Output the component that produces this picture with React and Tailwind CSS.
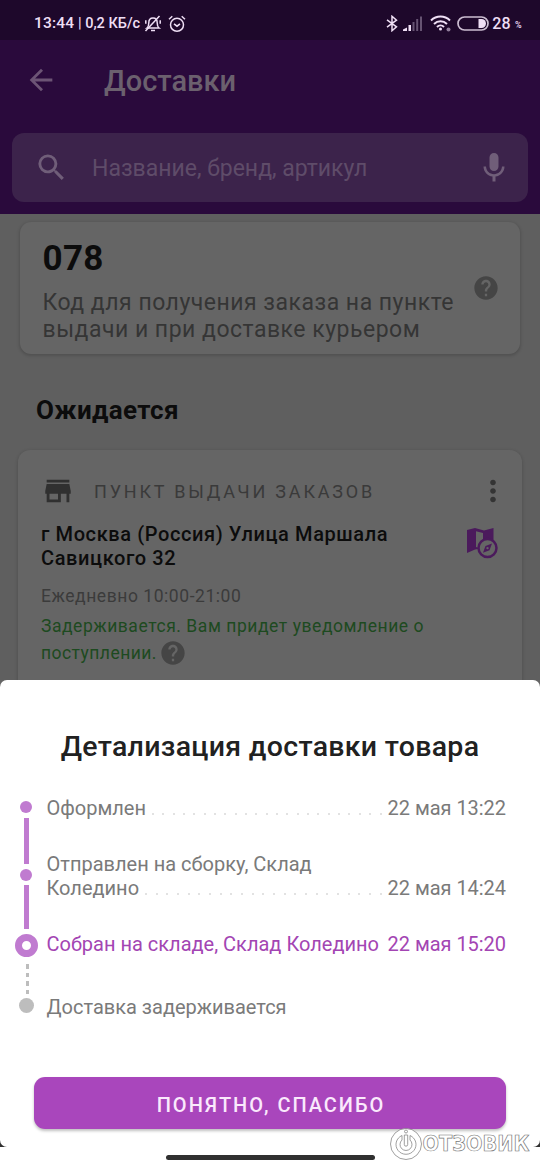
import { MdArrowBack, MdSearch, MdMic, MdHelp, MdStore, MdMoreVert } from "react-icons/md"

const steps = [
  { lines: ["Оформлен"], date: "22 мая 13:22", dots: true, className: "mt-[22px] text-[#7a7a7a]" },
  {
    lines: ["Отправлен на сборку, Склад", "Коледино"],
    date: "22 мая 14:24",
    dots: true,
    className: "mt-8 text-[#7a7a7a]",
  },
  { lines: ["Собран на складе, Склад Коледино"], date: "22 мая 15:20", className: "mt-8 text-[#a345b3]" },
  { lines: ["Доставка задерживается"], className: "mt-[39px] text-[#7a7a7a]" },
]

function StatusBar() {
  return (
    <div className="flex h-10 shrink-0 items-center bg-[#1e082b] pt-[7px] pl-[34px] pr-[17px] font-medium text-[#efdff5]">
      <span className="w-[107px] whitespace-nowrap text-[14.5px]">
        <span className="text-[15.5px] tracking-[0.2px]">13:44</span> | 0,2 КБ/с
      </span>
      <svg className="ml-[3px] h-[18px] w-[18px]" viewBox="0 0 18 18" fill="none" stroke="currentColor" strokeWidth="1.5">
        <path d="M3 13h12c-1.600-1.200-1.800-2.600-1.800-5.200C13.200 4.800 11.500 3 9 3S4.800 4.800 4.800 7.800C4.800 10.400 4.600 11.800 3 13z" />
        <path d="M7 15.500h4M1.500 16 15.500 1M1.800 5.200v3.500M16.200 5.200v3.500" />
      </svg>
      <svg className="ml-[6px] h-[18px] w-[18px]" viewBox="0 0 18 18" fill="none" stroke="currentColor" strokeWidth="1.5">
        <circle cx="9" cy="9.800" r="6.500" />
        <path d="M6 8.800l3 2.400 3-2.400M1 4.200 4.300 1.200M17 4.200 13.700 1.200" />
      </svg>
      <svg className="ml-auto h-[17px] w-[12px]" viewBox="0 0 12 17" fill="none" stroke="currentColor" strokeWidth="1.500">
        <path d="M1 4.800l9.500 7L6 15.700V1.300l4.500 3.900L1 12.200" />
      </svg>
      <svg className="ml-[5px] h-[15px] w-[20px]" viewBox="0 0 20 15" fill="currentColor">
        <path d="M0 13.500 4 11.500V15H0zM5.500 9h2.500v6H5.500z" />
        <path opacity=".35" d="M9.500 6h2v9h-2zM13.200 3h2v12h-2zM17 0.500h2v14.500h-2z" />
      </svg>
      <svg className="ml-[7px] h-[17px] w-[21px]" viewBox="0 0 21 17" fill="none" stroke="currentColor" strokeWidth="2">
        <path d="M1 5.500c5.400-5.200 13.600-5.200 19 0M4 9c3.800-3.600 9.200-3.600 13 0M7 12c2-2 5-2 7 0" />
        <circle cx="10.500" cy="14" r="1.500" fill="currentColor" stroke="none" />
        <circle cx="18.500" cy="14.500" r="2" fill="currentColor" stroke="none" opacity=".55" />
      </svg>
      <svg className="ml-[6px] h-[15px] w-[32px]" viewBox="0 0 32 15">
        <rect x="1" y="1" width="30" height="13" rx="6.500" fill="none" stroke="#cbbdd1" strokeWidth="1.700" />
        <path d="M21.500 3h3a4.500 4.500 0 0 1 0 9h-3z" fill="currentColor" />
      </svg>
      <span className="ml-[3px] text-[16px] tracking-[0.3px]">28</span>
      <span className="ml-[4px] w-[8px] pt-1 text-[9px]">%</span>
    </div>
  )
}

function Header() {
  return (
    <div className="flex h-[174px] shrink-0 flex-col bg-[#2a0a3c]">
      <div className="flex h-[93px] items-center pb-[12px] pl-6 text-[#6c5475]">
        <MdArrowBack className="mb-px h-[34px] w-[34px]" />
        <h1 className="ml-[46px] pt-[2px] text-[29px] font-medium text-[#6b606e]">Доставки</h1>
      </div>
      <div className="mx-3 flex h-[69px] items-center rounded-xl bg-[#3c234b] pl-[22px] pr-4 text-[#705e79]">
        <MdSearch className="h-[35px] w-[35px]" />
        <span className="ml-[23px] pt-[3px] text-[23px] text-[#5f4c69]">Название, бренд, артикул</span>
        <MdMic className="ml-auto h-[36px] w-[36px]" />
      </div>
    </div>
  )
}

function MapIcon() {
  return (
    <svg className="h-[32px] w-[32px]" viewBox="0 0 32 32">
      <path d="M1 3 9 1l9 2.500L27.500 1v20H18L9 22.500 1 26z" fill="#4b1a5c" />
      <path d="M10 4.200 17 6v16.500l-7-2.500z" fill="#656565" />
      <circle cx="21.500" cy="21" r="9" fill="#656565" stroke="#4b1a5c" strokeWidth="2.500" />
      <path d="M26 16.500l-2.500 6.800L17 25.700l2.500-6.700z" fill="#4b1a5c" />
      <circle cx="21.500" cy="21.100" r="1.200" fill="#656565" />
    </svg>
  )
}

function Orders() {
  return (
    <div className="h-[466px] shrink-0 overflow-hidden bg-[#5f5f5f] pt-[8px]">
      <div className="mx-5 flex h-[132px] items-center rounded-[11px] bg-[#656565] pl-[22.5px] pr-[20px] shadow-[0_1px_3px_1px_rgba(0,0,0,0.15)]">
        <div className="h-full whitespace-nowrap pt-[16px]">
          <p className="text-[35px] leading-[42px] font-bold tracking-[0.3px] text-[#0c0c0c]">078</p>
          <p className="mt-[9px] text-[23px] leading-[27px] tracking-[0.5px] text-[#353535]">
            Код для получения заказа на пункте
            <br />
            выдачи и при доставке курьером
          </p>
        </div>
        <MdHelp className="ml-auto h-[28px] w-[28px] shrink-0 text-[#454545]" />
      </div>
      <h2 className="mt-[40px] ml-[36px] text-[26px] leading-8 font-bold tracking-[0.35px] text-[#0c0c0c]">Ожидается</h2>
      <div className="mx-[18px] mt-[24px] h-[260px] rounded-[12px] bg-[#656565] pt-[24px] pl-[23px] pr-[12px] shadow-[0_1px_3px_1px_rgba(0,0,0,0.12)]">
        <div className="flex h-[34px] items-center">
          <MdStore className="h-[34px] w-[34px] text-[#303030]" />
          <span className="ml-[19px] whitespace-nowrap text-[18px] tracking-[2.8px] text-[#3a3a3a]">ПУНКТ ВЫДАЧИ ЗАКАЗОВ</span>
          <MdMoreVert className="ml-auto h-[34px] w-[34px] text-[#343434]" />
        </div>
        <div className="mt-[15px] flex justify-between pr-[12px]">
          <p className="whitespace-nowrap text-[20px] leading-[23.5px] font-medium tracking-[0.6px] text-[#0c0c0c]">
            г Москва (Россия) Улица Маршала
            <br />
            Савицкого 32
          </p>
          <div className="pt-[4px]">
            <MapIcon />
          </div>
        </div>
        <p className="mt-[14px] text-[17.5px] leading-6 tracking-[0.55px] text-[#3b3b3b]">Ежедневно 10:00-21:00</p>
        <p className="mt-[5px] whitespace-nowrap text-[17.5px] leading-[27px] tracking-[0.55px] text-[#1d4a20]">
          Задерживается. Вам придет уведомление о
        </p>
        <div className="flex h-[27px] items-center text-[17.5px] leading-[27px] tracking-[0.45px] text-[#1d4a20]">
          поступлении.
          <MdHelp className="mb-[2px] ml-[2px] h-[28px] w-[28px] text-[#454545]" />
        </div>
      </div>
    </div>
  )
}

function Timeline() {
  return (
    <div className="flex w-[22px] shrink-0 flex-col items-center">
      <div className="mt-[27px] h-[12px] w-[12px] rounded-full bg-[#c07bd0]" />
      <div className="mt-[5px] h-[46px] w-[5px] bg-[#c07bd0]" />
      <div className="mt-[5px] h-[12px] w-[12px] rounded-full bg-[#c07bd0]" />
      <div className="mt-[4px] h-[44px] w-[5px] bg-[#c07bd0]" />
      <div className="mt-[5px] h-[23px] w-[23px] rounded-full border-[7px] border-[#c07bd0]" />
      <div className="mt-[7px] ml-[3px] flex flex-col gap-[4px]">
        {[0, 1, 2, 3].map((i) => (
          <div key={i} className="h-[4.5px] w-[3px] bg-[#bdbdbd]" />
        ))}
      </div>
      <div className="mt-[4px] h-[15px] w-[15px] rounded-full bg-[#bdbdbd]" />
    </div>
  )
}

function Step({ step }) {
  const last = step.lines.length - 1
  return (
    <div className={step.className}>
      {step.lines.map((line, i) => (
        <div key={line} className="flex h-6 items-center whitespace-nowrap text-[20px] leading-6">
          <span>{line}</span>
          {i === last && step.dots && (
            <span className="ml-[6px] mr-[6px] flex flex-1 justify-between pt-[11px]">
              {Array.from({ length: 23 }, (_, n) => (
                <i key={n} className="h-[2px] w-[2px] rounded-full bg-[#d9d9d9]" />
              ))}
            </span>
          )}
          {i === last && step.date && <span className="ml-auto tracking-[-0.04px]">{step.date}</span>}
        </div>
      ))}
    </div>
  )
}

function Watermark() {
  return (
    <svg className="absolute top-[1126px] left-[388px] h-[36px] w-[150px]" viewBox="0 0 150 36" fill="#fff" stroke="#777" strokeWidth="0.7">
      <circle cx="18" cy="18" r="15.500" />
      <path d="M14 9.500a10 9.800 0 1 0 8 0v4.500a6 6 0 1 1-8 0z" />
      <path d="M16.300 9h3.400v9.500a1.700 1.700 0 0 1-3.400 0z" />
      <circle cx="18" cy="5.500" r="1.500" />
      <text
        x="34.500"
        y="25"
        className="font-['DejaVu_Sans',sans-serif] text-[20.5px] font-bold"
        textLength="107"
        lengthAdjust="spacingAndGlyphs"
      >
        ОТЗОВИК
      </text>
    </svg>
  )
}

export default function App() {
  return (
    <div className="relative flex h-[1170px] w-[540px] flex-col overflow-hidden bg-white font-[Roboto,sans-serif]">
      <StatusBar />
      <Header />
      <Orders />
      <div className="h-[467px] shrink-0 bg-[linear-gradient(#656565_50%,#303030_50%)]">
        <div className="flex h-full flex-col rounded-[7px] bg-white">
          <h2 className="mt-[48px] text-center text-[28.5px] leading-[38px] font-medium tracking-[0.3px] text-[#212121]">
            Детализация доставки товара
          </h2>
          <div className="mt-[8px] flex pr-[34px] pl-[15px]">
            <Timeline />
            <div className="ml-[9.5px] flex-1">
              {steps.map((step) => (
                <Step key={step.lines[0]} step={step} />
              ))}
            </div>
          </div>
          <button className="mx-[34px] mt-auto mb-[18px] h-[52px] shrink-0 rounded-[11px] bg-[#a946bc] pt-[3px] pl-[2px] text-[20px] font-medium tracking-[2px] text-[#fae9fc] shadow-[0_2px_3px_rgba(0,0,0,0.25)]">
            ПОНЯТНО, СПАСИБО
          </button>
        </div>
      </div>
      <div className="mx-auto mt-[8px] h-[5px] w-[209px] rounded-full bg-[#303030]" />
      <Watermark />
    </div>
  )
}
